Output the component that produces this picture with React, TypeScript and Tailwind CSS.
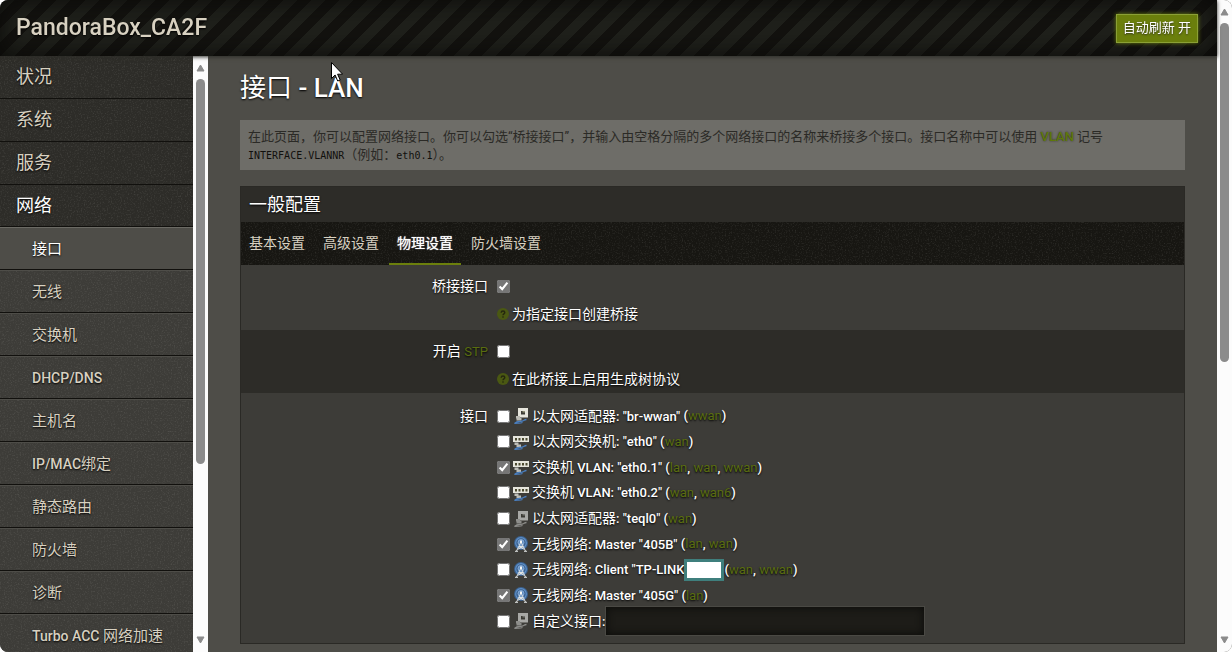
import React from 'react';

const mainMenu = ['状况', '系统', '服务'];

const subMenu = [
  '接口',
  '无线',
  '交换机',
  'DHCP/DNS',
  '主机名',
  'IP/MAC绑定',
  '静态路由',
  '防火墙',
  '诊断',
  'Turbo ACC 网络加速',
];

const tabs = ['基本设置', '高级设置', '物理设置', '防火墙设置'];

type Device = {
  icon: 'adapter' | 'adapterOff' | 'switch' | 'wifi';
  name: string;
  nets: string[];
  checked?: boolean;
  masked?: boolean;
};

const devices: Device[] = [
  { icon: 'adapter', name: '以太网适配器: "br-wwan"', nets: ['wwan'] },
  { icon: 'switch', name: '以太网交换机: "eth0"', nets: ['wan'] },
  { icon: 'switch', name: '交换机 VLAN: "eth0.1"', nets: ['lan', 'wan', 'wwan'], checked: true },
  { icon: 'switch', name: '交换机 VLAN: "eth0.2"', nets: ['wan', 'wan6'] },
  { icon: 'adapterOff', name: '以太网适配器: "teql0"', nets: ['wan'] },
  { icon: 'wifi', name: '无线网络: Master "405B"', nets: ['lan', 'wan'], checked: true },
  { icon: 'wifi', name: '无线网络: Client "TP-LINK', nets: ['wan', 'wwan'], masked: true },
  { icon: 'wifi', name: '无线网络: Master "405G"', nets: ['lan'], checked: true },
];

// Latin runs are set a little smaller and heavier than the Chinese around them
const Mixed = ({ text, latin }: { text: string; latin: string }) => (
  <>
    {text.split(/([ -~]+)/).map((part, i) =>
      i % 2 === 1 ? (
        <span key={i} className={latin}>
          {part}
        </span>
      ) : (
        part
      )
    )}
  </>
);

const Noise = ({ id }: { id: string }) => (
  <svg className="pointer-events-none absolute inset-0 h-full w-full opacity-10" aria-hidden="true">
    <filter id={id}>
      <feTurbulence type="fractalNoise" baseFrequency="0.7" numOctaves="2" seed="4" />
      <feColorMatrix values="0 0 0 0 0.75  0 0 0 0 0.74  0 0 0 0 0.7  3 0 0 0 -1.5" />
    </filter>
    <rect width="100%" height="100%" filter={`url(#${id})`} />
  </svg>
);

const DeviceIcon = ({ kind }: { kind: Device['icon'] }) => {
  if (kind === 'wifi') {
    return (
      <svg className="h-4 w-4 shrink-0" viewBox="0 0 16 16" fill="none" aria-hidden="true">
        <circle cx="8" cy="7" r="7" fill="#3a618f" />
        <circle cx="8" cy="7" r="5.300" stroke="#5f8fc6" strokeWidth="1.200" />
        <circle cx="8" cy="6.500" r="3" fill="#5f8cc0" stroke="#94b8e0" strokeWidth=".8" />
        <path d="M8 6 3.500 15M8 6l4.500 9M6 10.500h4M4.800 13.200l5.200-2.400M11.200 13.200 6 10.800M2 15.300h3M11 15.300h3" stroke="#dfe2e2" />
        <rect x="7" y="4.500" width="2" height="2.500" fill="#f8f8f4" />
      </svg>
    );
  }
  if (kind === 'switch') {
    return (
      <svg className="h-4 w-4 shrink-0" viewBox="0 0 16 16" fill="none" aria-hidden="true">
        <path d="M0 2h16v6H0z" fill="#e6e5dc" />
        <path d="M2 4h2v2.500H2zM5.500 4h2v2.500h-2zM9 4h2v2.500H9zM12.500 4h2v2.500h-2z" fill="#4b4a30" />
        <path d="M1.500 8.500h4v2H8v2.500H3.500V11h-2z" fill="#bcbcb6" />
        <path d="M13.500 11.500c-2.500 0-3.500 2.300-6 1.900-2-.3-4 .2-6 2.100 3-1 5 .2 8-1" stroke="#4a7fc0" strokeWidth="1.300" />
      </svg>
    );
  }
  const off = kind === 'adapterOff';
  return (
    <svg className="h-4 w-4 shrink-0" viewBox="0 0 16 16" fill="none" aria-hidden="true">
      <path d="M5 0h10v9.500H5z" fill={off ? '#a8a8a5' : '#e6e5dc'} />
      <path d="M8 3h4v3.500H8z" fill="#3b3a34" />
      <path d="M9.500 3H12v1.500H9.500z" fill={off ? '#74746f' : '#8f8f74'} />
      <path d="M3 8h4v2h1.500v2.500h-5V10.500H3z" fill={off ? '#8e8e8b' : '#bcbcb6'} />
      <path d="M13.500 11.500c-2.500 0-3.500 2.300-6 1.900-2-.3-4 .2-6 2.100 3-1 5 .2 8-1" stroke={off ? '#8b8b88' : '#4a7fc0'} strokeWidth="1.300" />
    </svg>
  );
};

const HelpIcon = () => (
  <svg className="h-3 w-3 shrink-0" viewBox="0 0 12 12" aria-hidden="true">
    <circle cx="6" cy="6" r="6" fill="#4a5812" />
    <path d="M4.200 4.700C4.200 2.300 7.800 2.500 7.800 4.500 7.800 5.900 6 5.800 6 7.300" fill="none" stroke="#25270f" strokeWidth="1.400" />
    <rect x="5.300" y="8.300" width="1.400" height="1.400" fill="#25270f" />
  </svg>
);

const ScrollBar = ({ children }: { children: React.ReactNode }) => (
  <div className="flex w-[15px] shrink-0 flex-col items-center gap-[7px] bg-[#fcfcfc] py-2" aria-hidden="true">
    <svg className="h-[8px] w-[9px]" viewBox="0 0 9 8">
      <path d="M4.500 1 8 7H1z" fill="#8b8b8b" stroke="#8b8b8b" strokeLinejoin="round" />
    </svg>
    <div className="w-[9px] flex-1">{children}</div>
    <svg className="h-[8px] w-[9px]" viewBox="0 0 9 8">
      <path d="M4.500 7 8 1H1z" fill="#8b8b8b" stroke="#8b8b8b" strokeLinejoin="round" />
    </svg>
  </div>
);

const Networks = ({ nets }: { nets: string[] }) => (
  <>
    (
    {nets.map((net, i) => (
      <React.Fragment key={net}>
        {i > 0 && ', '}
        <a href="#network" className="font-normal text-[#5a6d10]">
          {net}
        </a>
      </React.Fragment>
    ))}
    )
  </>
);

const Sidebar = () => (
  <nav className="w-[193px] shrink-0 overflow-y-auto bg-[#2d2c28] [scrollbar-width:none]">
    <div className="relative">
      <Noise id="menu-noise" />
      <ul className="relative text-[18px] [text-shadow:0_1px_2px_#000]">
        {mainMenu.map((item) => (
          <li key={item} className="border-b border-[#11100d]">
            <a href="#menu" className="block pl-4 leading-[42px] text-[#d8d1c1]">
              {item}
            </a>
          </li>
        ))}
        <li className="border-b border-[#11100d]">
          <a href="#menu" className="block pl-4 leading-[41px] text-white">
            网络
          </a>
        </li>
      </ul>
    </div>
    <div className="relative bg-[#3d3c38]">
      <Noise id="submenu-noise" />
      <ul className="relative text-[15px] [text-shadow:0_1px_2px_#000]">
        {subMenu.map((item) => (
          <li key={item} className="border-b border-[#11100d]">
            <a
              href="#submenu"
              className={
                item === '接口'
                  ? 'block h-[42px] bg-[#4e4d48] pl-8 leading-[44px] text-white shadow-[inset_0_1px_0_#6b6a64]'
                  : 'block h-[42px] pl-8 leading-[44px] text-[#d8d1c1] shadow-[inset_0_1px_0_#4e4d48]'
              }
            >
              <Mixed text={item} latin="text-[14px] font-medium" />
            </a>
          </li>
        ))}
      </ul>
    </div>
  </nav>
);

const Description = () => (
  <p className="mt-4 bg-[#6e6d68] px-2 pt-2 pb-[6px] text-[13px] leading-[18px] text-[#2b2a26]">
    在此页面，你可以配置网络接口。你可以勾选“桥接接口”，并输入由空格分隔的多个网络接口的名称来桥接多个接口。接口名称中可以使用{' '}
    <abbr title="虚拟局域网" className="font-medium text-[#5f780a] no-underline [text-shadow:0_0_2px_#2d2c28]">
      VLAN
    </abbr>{' '}
    记号{' '}
    <code className="font-['DejaVu_Sans_Mono',monospace] text-[10px] leading-none text-[#11100d]">INTERFACE.VLANNR</code>
    （例如：
    <code className="font-['DejaVu_Sans_Mono',monospace] text-[10px] leading-none text-[#11100d]">eth0.1</code>）。
  </p>
);

const InterfaceForm = () => (
  <form className="mt-4 border border-[#2a2925] bg-[#3d3c38] text-[14px] text-white">
    <h3 className="bg-[#2d2c28] pl-2 text-[18px] leading-[35px] [text-shadow:0_1px_2px_#000]">一般配置</h3>
    <div className="relative bg-[#171612]">
      <Noise id="tabs-noise" />
      <div className="relative flex gap-[2px]">
        {tabs.map((tab) => (
          <button
            key={tab}
            type="button"
            className={
              tab === '物理设置'
                ? 'h-[43px] border-b-2 border-[#6b7f0c] px-2 pt-[2px] text-white [text-shadow:0_0_1px_#fff]'
                : 'h-[43px] border-b-2 border-transparent px-2 pt-[2px] text-[#d8d1c1]'
            }
          >
            {tab}
          </button>
        ))}
      </div>
    </div>

    <div className="flex h-[65px] pt-2 [text-shadow:0_1px_2px_#000]">
      <label htmlFor="bridge" className="w-64 shrink-0 pr-[9px] text-right leading-[26px]">
        桥接接口
      </label>
      <div>
        <div className="flex h-[26px] items-center">
          <input id="bridge" type="checkbox" defaultChecked className="h-[13px] w-[13px] accent-[#767676]" />
        </div>
        <div className="flex h-[30px] items-center gap-[3px]">
          <HelpIcon />
          为指定接口创建桥接
        </div>
      </div>
    </div>

    <div className="flex h-[63px] bg-[#2d2c28] pt-2 [text-shadow:0_1px_2px_#000]">
      <label htmlFor="stp" className="w-64 shrink-0 pr-[9px] text-right leading-[26px]">
        开启{' '}
        <abbr title="生成树协议" className="text-[13px] text-[#5a6d10] no-underline">
          STP
        </abbr>
      </label>
      <div>
        <div className="flex h-[26px] items-center">
          <input id="stp" type="checkbox" className="h-[13px] w-[13px] accent-[#767676]" />
        </div>
        <div className="flex h-[30px] items-center gap-[3px]">
          <HelpIcon />
          在此桥接上启用生成树协议
        </div>
      </div>
    </div>

    <div className="flex pt-[11px] pb-[10px] [text-shadow:0_1px_2px_#000]">
      <span className="w-64 shrink-0 pr-[9px] text-right leading-6">接口</span>
      <ul className="flex h-[229px] flex-col justify-between">
        {devices.map((device, i) => (
          <li key={device.name} className="flex h-6 items-center gap-[3px]">
            <input id={`dev-${i}`} type="checkbox" defaultChecked={device.checked} className="h-[13px] w-[13px] accent-[#767676]" />
            <DeviceIcon kind={device.icon} />
            <div className="flex items-center whitespace-pre">
              <label htmlFor={`dev-${i}`}>
                <Mixed text={device.name} latin="text-[13px] font-medium" />
              </label>
              {device.masked && <span className="h-[22px] w-10 border-3 border-[#3f7f7d] bg-white" />}
              <span className="text-[13px] font-medium">
                {!device.masked && ' '}
                <Networks nets={device.nets} />
              </span>
            </div>
          </li>
        ))}
        <li className="flex h-6 items-center gap-[3px]">
          <input id="custom" type="checkbox" className="h-[13px] w-[13px] accent-[#767676]" />
          <DeviceIcon kind="adapterOff" />
          <div className="flex items-center">
            <label htmlFor="custom">
              <Mixed text="自定义接口:" latin="text-[13px] font-medium" />
            </label>
            <input
              type="text"
              aria-label="自定义接口"
              className="h-[30px] w-80 border border-[#4a4944] bg-[#1d1c18] px-2 shadow-[inset_0_0_8px_#0a0a08] outline-none"
            />
          </div>
        </li>
      </ul>
    </div>
  </form>
);

const App = () => {
  return (
    <div className="relative flex h-screen overflow-hidden rounded-lg bg-[#4e4d48] font-[Roboto,'Noto_Sans_CJK_SC',sans-serif]">
      <div className="flex min-w-0 flex-1 flex-col">
        <header className="z-10 flex h-14 shrink-0 items-center justify-between bg-[#171612] bg-[repeating-linear-gradient(-45deg,#13120f_0px,#13120f_10px,#1f201b_10px,#1f201b_20px)] pr-[19px] pl-4 shadow-[0_1px_4px_#2d2c28,inset_0_0_24px_#0a0a08]">
          <a href="#home" className="text-[23px] font-medium text-[#d8d1c1] [text-shadow:0_1px_2px_#000]">
            PandoraBox_CA2F
          </a>
          <button
            type="button"
            className="h-[29px] border border-[#8ba036] bg-[#6b7f0c] px-[6px] text-[13px] text-white shadow-[0_0_4px_#6b7f0c] [text-shadow:0_1px_2px_#2d2c28]"
          >
            自动刷新 开
          </button>
        </header>
        <div className="flex min-h-0 flex-1">
          <Sidebar />
          <ScrollBar>
            <div className="h-[70%] rounded-full bg-[#8b8b8b]" />
          </ScrollBar>
          <main className="min-w-0 flex-1 overflow-y-auto px-8 pt-4 pb-2 [scrollbar-width:none]">
            <h2 className="text-[26px] leading-8 text-white [text-shadow:0_1px_2px_#000]">
              <Mixed text="接口 - LAN" latin="font-medium" />
            </h2>
            <Description />
            <InterfaceForm />
          </main>
        </div>
      </div>
      <ScrollBar>
        <div className="h-[56%] rounded-full bg-[#8b8b8b]" />
      </ScrollBar>
      <svg className="pointer-events-none absolute top-[62px] left-[331px] z-20 h-5 w-3" viewBox="0 0 12 20" aria-hidden="true">
        <path d="M.5 .5v16l3.600-3.500 2.600 6 2.500-1-2.600-5.800h5z" fill="#fff" stroke="#000" />
      </svg>
    </div>
  );
};

export default App;
